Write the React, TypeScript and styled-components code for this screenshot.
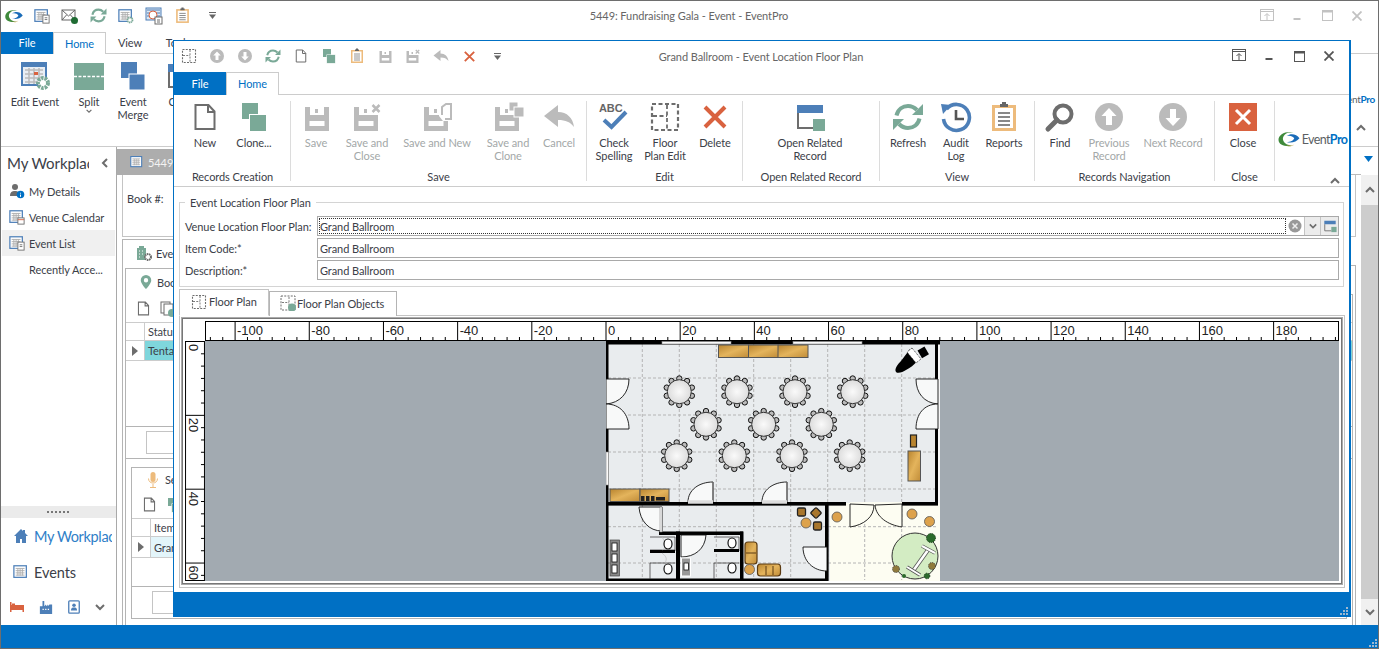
import React from "react";
import styled, { createGlobalStyle } from "styled-components";

const BLUE = "#0070c4";
const TEAL = "#7aa997";
const STEEL = "#4d7fb8";
const GREY = "#6d6d6d";
const OFF = "#bbbbbb";
const RED = "#d9623f";
const TAN = "#edbb7c";

const Global = createGlobalStyle`
  html, body { margin: 0; padding: 0; background: #fff; overflow: hidden; }
  * { box-sizing: border-box; }
  body { font-family: "Lato", "Noto Sans", sans-serif; font-size: 11px; letter-spacing: -0.08px; color: #3b4048; }
`;

const Ico = styled.svg<{ $w?: number; $h?: number }>`
  width: ${(p) => p.$w ?? 32}px;
  height: ${(p) => p.$h ?? p.$w ?? 32}px;
  display: block;
  flex: none;
`;

type IP = { s?: number; c?: string };
const NewIco = ({ s, c = GREY }: IP) => (
  <Ico $w={s} viewBox="0 0 32 32"><path d="M6.500 4h13l6 6.500V28h-19zM19 4v7h6.500" fill="#fff" stroke={c} strokeWidth="2" /></Ico>
);
const CloneIco = ({ s }: IP) => (
  <Ico $w={s} viewBox="0 0 32 32"><rect x="4" y="2" width="16" height="16" fill={TEAL} /><rect x="11.500" y="13.500" width="17" height="17" fill={TEAL} stroke="#fff" strokeWidth="1" /></Ico>
);
const floppy = (
  <path fillRule="evenodd" d="M5 6h24v24H5zM10 6v8h14V6zM9.500 20v5h15v-5z M15 8h3v4h-3z" fill={OFF} />
);
const SaveIco = ({ s }: IP) => <Ico $w={s} viewBox="0 0 32 32">{floppy}</Ico>;
const SaveCloseIco = ({ s }: IP) => (
  <Ico $w={s} viewBox="0 0 32 32">
    <g transform="translate(-2 0)">{floppy}</g>
    <rect x="19" y="2" width="12" height="12" fill="#fff" />
    <path d="M21.500 4l7 7m0-7l-7 7" stroke={OFF} strokeWidth="2.500" />
  </Ico>
);
const SaveNewIco = ({ s }: IP) => (
  <Ico $w={s} viewBox="0 0 32 32">
    <g transform="translate(-2 0)">{floppy}</g>
    <path d="M18 15V5l4-3h8v18h-8" fill="#fff" />
    <path d="M21 14V6l4-3h5v15h-6" fill="none" stroke={OFF} strokeWidth="2" />
  </Ico>
);
const SaveCloneIco = ({ s }: IP) => (
  <Ico $w={s} viewBox="0 0 32 32">
    <g transform="translate(-2 0)">{floppy}</g>
    <rect x="17" y="1" width="9" height="9" fill={OFF} stroke="#fff" />
    <rect x="22" y="6" width="10" height="10" fill={OFF} stroke="#fff" />
  </Ico>
);
const CancelIco = ({ s, c = OFF }: IP) => (
  <Ico $w={s} viewBox="0 0 32 32"><path d="M1 15L15 4v7c9 0 15 6 16 15-4-5-8-7-16-7v7z" fill={c} /></Ico>
);
const CheckIco = () => (
  <Ico viewBox="0 0 32 32">
    <text x="1" y="11" fontFamily="Liberation Sans" fontSize="11" fontWeight="700" fill="#666">ABC</text>
    <path d="M6 19l7.500 7L28 11" fill="none" stroke={STEEL} strokeWidth="4" />
  </Ico>
);
const PlanIco = ({ s }: IP) => (
  <Ico $w={s} viewBox="0 0 32 32">
    <rect x="3" y="3" width="26" height="26" fill="none" stroke={GREY} strokeWidth="2.200" strokeDasharray="4 2.500" />
    <path d="M18 4v24M4 15h14" fill="none" stroke={GREY} strokeWidth="1.800" strokeDasharray="4 2.500" />
  </Ico>
);
const PlanObjIco = () => (
  <Ico $w={16} viewBox="0 0 32 32">
    <rect x="2" y="2" width="28" height="28" fill="none" stroke={GREY} strokeWidth="2" strokeDasharray="4 2.500" />
    <path d="M18 4v24M4 15h14" fill="none" stroke={GREY} strokeWidth="1.800" strokeDasharray="4 2.500" />
    <circle cx="24" cy="25" r="8" fill={TEAL} />
  </Ico>
);
const XIco = ({ s, c = RED, w = 4 }: IP & { w?: number }) => (
  <Ico $w={s} viewBox="0 0 32 32"><path d="M6 6l20 20m0-20L6 26" stroke={c} strokeWidth={w} fill="none" /></Ico>
);
const RelatedIco = ({ s }: IP) => (
  <Ico $w={s} viewBox="0 0 32 32">
    <rect x="3" y="4" width="26" height="8" fill={STEEL} />
    <path d="M4 12v15h15" fill="none" stroke={GREY} strokeWidth="2" />
    <rect x="19" y="18" width="12" height="12" fill={TEAL} />
  </Ico>
);
const RefreshIco = ({ s }: IP) => (
  <Ico $w={s} viewBox="0 0 32 32">
    <path d="M4.500 14.500C6 8 11 5 16 5c4 0 6.500 1.500 9 4" fill="none" stroke={TEAL} strokeWidth="4" />
    <path d="M31 3v11H20z" fill={TEAL} />
    <path d="M27.500 17.500C26 24 21 27 16 27c-4 0-6.500-1.500-9-4" fill="none" stroke={TEAL} strokeWidth="4" />
    <path d="M1 29V18h11z" fill={TEAL} />
  </Ico>
);
const AuditIco = () => (
  <Ico viewBox="0 0 32 32">
    <path d="M6.500 8A13 13 0 1 1 3.500 18" fill="none" stroke={STEEL} strokeWidth="3.600" />
    <path d="M1 3l10 1-8 9z" fill={STEEL} />
    <path d="M16 9v9h8" fill="none" stroke="#555" strokeWidth="2.600" />
  </Ico>
);
const ReportsIco = ({ s }: IP) => (
  <Ico $w={s} viewBox="0 0 32 32">
    <rect x="4" y="4" width="24" height="26" fill={TAN} />
    <rect x="7" y="7" width="18" height="20" fill="#fff" />
    <path d="M12 6V3h2V1h4v2h2v3z" fill="#666" />
    <path d="M10 12h12M10 16h12M10 20h12M10 24h12" stroke="#888" strokeWidth="1.800" />
  </Ico>
);
const FindIco = () => (
  <Ico viewBox="0 0 32 32">
    <circle cx="19" cy="13" r="8.500" fill="none" stroke={GREY} strokeWidth="4" />
    <path d="M13 19L4 28" stroke={GREY} strokeWidth="5" strokeLinecap="round" />
  </Ico>
);
const RoundArrow = ({ s, down }: IP & { down?: boolean }) => (
  <Ico $w={s} viewBox="0 0 32 32">
    <circle cx="16" cy="16" r="14" fill={OFF} />
    <path transform={down ? "rotate(180 16 16)" : undefined} d="M16 7l7.500 8H19v9h-6v-9H8.500z" fill="#fff" />
  </Ico>
);
const CloseBox = () => (
  <Ico viewBox="0 0 32 32">
    <rect x="2" y="2" width="28" height="28" fill={RED} />
    <path d="M9 9l14 14m0-14L9 23" stroke="#fff" strokeWidth="3" />
  </Ico>
);
const Swoosh = ({ s = 24 }: IP) => (
  <Ico $w={s} viewBox="0 0 32 24">
    <path d="M2 13C2 6 11 1 22 3 13 2 7 7 8 13c1 5 7 8 14 8C11 23 2 20 2 13z" fill="#3f8a3c" />
    <path d="M13 8c5-4 13-3 17 3-4 5-11 7-17 5 5 0 9-2 10-5-2-3-6-4-10-3z" fill="#1a6cb8" />
    <path d="M12 20c4 2 8 1 11-1-3 3-7 4-11 1z" fill="#d9a23f" />
  </Ico>
);
const Cal = ({ s = 16, extra }: IP & { extra?: "doc" | "gear" | "cal" }) => (
  <Ico $w={s} viewBox="0 0 18 18">
    <rect x="1" y="2" width="14" height="13" fill="#fff" stroke={STEEL} strokeWidth="1.400" />
    <path d="M3 5h10M3 7.500h10M3 10h10M3 12.500h10M5.500 5v8M8 5v8M10.500 5v8" stroke="#aaa" strokeWidth="1" />
    {extra === "doc" && <><rect x="10" y="8" width="7" height="9" fill="#fff" stroke={GREY} /><path d="M12 11h3M12 13h3" stroke={GREY} /></>}
    {extra === "cal" && <><rect x="10" y="10" width="7" height="7" fill="#fff" stroke={GREY} /><path d="M10 12h7" stroke={RED} /></>}
    {extra === "gear" && <circle cx="13.500" cy="13.500" r="2.800" fill="#fff" stroke={TEAL} strokeWidth="2" strokeDasharray="1.500 .6" />}
  </Ico>
);
const Mail = () => (
  <Ico $w={18} viewBox="0 0 18 18">
    <rect x="1" y="3" width="13" height="10" fill="#fff" stroke="#666" />
    <path d="M1 3l6.500 6L14 3M1 13l4.500-5M14 13L9.500 8" fill="none" stroke="#666" />
    <circle cx="13.500" cy="13.500" r="3.500" fill="#1f6b33" />
  </Ico>
);
const Schedule = () => (
  <Ico $w={18} viewBox="0 0 18 18">
    <rect x="1" y="1" width="15" height="12" fill="#dfe8f2" stroke={STEEL} />
    <path d="M2 3h13M2 6h13M2 9h13" stroke={STEEL} />
    <circle cx="8" cy="8" r="4" fill="#fff" stroke={RED} />
    <rect x="10" y="10" width="7" height="7" fill="#fff" stroke={GREY} />
    <path d="M12 13h3M12 15h3" stroke={GREY} />
  </Ico>
);
const Gear = () => (
  <Ico viewBox="0 0 32 32">
    <rect x="3" y="3" width="24" height="22" fill="#e9eef4" stroke={STEEL} strokeWidth="2" />
    <rect x="3" y="3" width="24" height="4" fill={STEEL} />
    <path d="M6 10h18M6 14h18M6 18h18M6 22h18M10 8v16M15 8v16M20 8v16" stroke="#bbb" strokeWidth="1.500" />
    <rect x="15" y="12" width="4" height="3" fill={RED} />
    <circle cx="24" cy="23" r="5" fill="#fff" stroke={TEAL} strokeWidth="4" strokeDasharray="2.500 1" />
  </Ico>
);
const Split = () => (
  <Ico viewBox="0 0 32 32">
    <rect x="1" y="3" width="30" height="27" fill={TEAL} />
    <path d="M1 16.500h30" stroke="#fff" strokeWidth="1.500" strokeDasharray="3 1.500" />
  </Ico>
);
const Merge = () => (
  <Ico viewBox="0 0 32 32">
    <rect x="4" y="2" width="16" height="16" fill={STEEL} />
    <rect x="12" y="14" width="16" height="16" fill={STEEL} stroke="#fff" strokeWidth="1" />
  </Ico>
);
const Person = () => (
  <Ico $w={16} viewBox="0 0 16 16">
    <circle cx="6" cy="4" r="3" fill={GREY} />
    <path d="M1 13c0-4 2-5 5-5s4 1 4 5z" fill={GREY} />
    <circle cx="11.500" cy="11.500" r="3.800" fill={BLUE} />
    <path d="M11.500 9.800v.8m0 1v2.200" stroke="#fff" />
  </Ico>
);
const Pin = () => (
  <Ico $w={14} viewBox="0 0 14 16"><path fillRule="evenodd" d="M7 0a6 6 0 0 1 6 6c0 4-6 10-6 10S1 10 1 6a6 6 0 0 1 6-6zm0 3.500a2.500 2.500 0 1 0 0 5 2.500 2.500 0 0 0 0-5z" fill={TEAL} /></Ico>
);
const Building = () => (
  <Ico $w={16} viewBox="0 0 16 16">
    <rect x="1" y="3" width="9" height="12" fill={TEAL} />
    <rect x="3" y="1" width="5" height="3" fill={TEAL} />
    <path d="M3 6h1M6 6h1M3 9h1M6 9h1M3 12h1" stroke="#fff" />
    <circle cx="12" cy="12" r="3" fill="#fff" stroke={GREY} strokeWidth="2" strokeDasharray="1.500 .6" />
  </Ico>
);
const Mic = () => (
  <Ico $w={16} viewBox="0 0 16 16">
    <rect x="5.500" y="0" width="5" height="10" rx="2.500" fill={TAN} />
    <path d="M3.500 6.500c0 6 9 6 9 0M8 12v3M5 15.500h6" fill="none" stroke={TAN} />
  </Ico>
);
const CopyPlus = () => (
  <Ico $w={16} viewBox="0 0 16 16">
    <rect x="1" y="1" width="9" height="11" fill="#fff" stroke={GREY} />
    <rect x="4" y="3" width="9" height="11" fill="#fff" stroke={GREY} />
    <circle cx="12" cy="12" r="4" fill={TEAL} />
  </Ico>
);
const Home = () => (
  <Ico $w={16} viewBox="0 0 16 16"><path d="M8 1L1 8h2v7h4v-4h2v4h4V8h2l-3-3V2h-2v1z" fill={STEEL} /></Ico>
);
const Bed = () => (
  <Ico $w={16} viewBox="0 0 16 16"><path fillRule="evenodd" d="M1 3h1.500v3H15v7h-1.500v-2h-11v2H1zM3 4.500h3V6H3z" fill={RED} /></Ico>
);
const Factory = () => (
  <Ico $w={14} viewBox="0 0 14 16"><path fillRule="evenodd" d="M3 1h2v6l2-2v2l2-2v2l2-2 3 0v11H0V7h3zM3 10v1.500h1.500V10zm3 0v1.500h1.500V10zm3 0v1.500h1.500V10z" fill={STEEL} /></Ico>
);
const Contact = () => (
  <Ico $w={14} viewBox="0 0 14 16">
    <rect x="1" y="1" width="12" height="14" rx="1" fill="#fff" stroke={STEEL} strokeWidth="1.500" />
    <circle cx="7" cy="6" r="2" fill={STEEL} />
    <path d="M3.500 12c0-3 1.500-3.500 3.500-3.500s3.500.5 3.500 3.500z" fill={STEEL} />
  </Ico>
);
const Chev = ({ dir = "down", c = GREY, s = 10 }: { dir?: "down" | "up" | "left"; c?: string; s?: number }) => (
  <Ico $w={s} viewBox="0 0 10 10">
    <path d={dir === "down" ? "M1 3l4 4 4-4" : dir === "up" ? "M1 7l4-4 4 4" : "M7 1L3 5l4 4"} fill="none" stroke={c} strokeWidth="2" />
  </Ico>
);
const QatMore = () => (
  <Ico $w={9} viewBox="0 0 9 9"><path d="M1 1.500h7" stroke="#666" /><path d="M1 3.500h7L4.500 8z" fill="#666" /></Ico>
);
const Restore = ({ c }: { c: string }) => (
  <Ico $w={14} viewBox="0 0 14 14"><rect x=".5" y=".5" width="13" height="11" fill="none" stroke={c} /><path d="M.5 2.500h13M7 12V5M4.500 7L7 4.500 9.500 7" fill="none" stroke={c} /></Ico>
);
const Minim = ({ c }: { c: string }) => (
  <Ico $w={10} viewBox="0 0 10 10"><path d="M1.500 8h7" stroke={c} strokeWidth="2" /></Ico>
);
const Maxim = ({ c }: { c: string }) => (
  <Ico $w={11} viewBox="0 0 11 11"><rect x=".5" y=".5" width="10" height="10" fill="none" stroke={c} /><path d="M0 1.500h11" stroke={c} strokeWidth="2" /></Ico>
);
const CloseMini = ({ c }: { c: string }) => (
  <Ico $w={10} viewBox="0 0 10 10"><path d="M.5.500l9 9m0-9l-9 9" stroke={c} strokeWidth="1.800" /></Ico>
);
const Grip = () => (
  <Ico $w={9} viewBox="0 0 9 9"><path d="M7 1h2v2H7zM4 4h2v2H4zM7 4h2v2H7zM1 7h2v2H1zM4 7h2v2H4zM7 7h2v2H7z" fill="#9fb8cf" /></Ico>
);
const Tri = ({ c = GREY }: { c?: string }) => (
  <Ico $w={6} $h={10} viewBox="0 0 6 10"><path d="M0 0l6 5-6 5z" fill={c} /></Ico>
);

/* ---------- outer window ---------- */
const Win = styled.div`
  position: relative;
  width: 1379px;
  height: 649px;
  border: 1px solid #6e6e6e;
  display: flex;
  flex-direction: column;
  overflow: hidden;
  background: #fff;
`;
const TitleBar = styled.div<{ $h: number; $pb: number }>`
  position: relative;
  height: ${(p) => p.$h}px;
  padding-bottom: ${(p) => p.$pb}px;
  display: flex;
  align-items: center;
  flex: none;
`;
const Qat = styled.div<{ $pl: number; $gap: number }>`
  display: flex;
  align-items: center;
  gap: ${(p) => p.$gap}px;
  padding-left: ${(p) => p.$pl}px;
`;
const QatSlot = styled.span<{ $w?: number }>`
  width: ${(p) => p.$w ?? 18}px;
  height: 18px;
  display: flex;
  align-items: center;
  justify-content: center;
`;
const Title = styled.div<{ $x: number; $pb: number }>`
  position: absolute;
  left: ${(p) => p.$x}px;
  top: 0;
  bottom: ${(p) => p.$pb}px;
  transform: translateX(-50%);
  display: flex;
  align-items: center;
  color: #666;
  white-space: nowrap;
`;
const Controls = styled.div<{ $pr: number }>`
  margin-left: auto;
  padding-right: ${(p) => p.$pr}px;
  display: flex;
  align-items: center;
`;
const Ctl = styled.span`
  width: 30px;
  display: flex;
  justify-content: center;
`;
const TabRow = styled.div<{ $h: number }>`
  height: ${(p) => p.$h}px;
  display: flex;
  flex: none;
  position: relative;
  z-index: 1;
`;
const FileTab = styled.div`
  width: 52px;
  background: ${BLUE};
  color: #fff;
  display: flex;
  align-items: center;
  justify-content: center;
  margin-bottom: -1px;
  padding-bottom: 1px;
`;
const HomeTab = styled.div<{ $w: number }>`
  width: ${(p) => p.$w}px;
  border: 1px solid #ccc;
  border-bottom: none;
  background: #fff;
  margin-bottom: -1px;
  padding-bottom: 1px;
  color: ${BLUE};
  display: flex;
  align-items: center;
  justify-content: center;
`;
const PlainTab = styled.div<{ $w: number }>`
  width: ${(p) => p.$w}px;
  display: flex;
  align-items: center;
  justify-content: center;
`;
const OuterRibbon = styled.div`
  height: 94px;
  flex: none;
  border-top: 1px solid #ccc;
  border-bottom: 1px solid #ccc;
  display: flex;
  padding-top: 6px;
`;
const RibBtn = styled.div<{ $w: number; $off?: boolean }>`
  width: ${(p) => p.$w}px;
  flex: none;
  display: flex;
  flex-direction: column;
  align-items: center;
  text-align: center;
  line-height: 13px;
  color: ${(p) => (p.$off ? "#a3a8a8" : "#3b4048")};
`;
const RibText = styled.div`
  padding-top: 3px;
  white-space: pre-line;
`;
const OuterLogo = styled.div`
  margin-left: auto;
  width: 28px;
  display: flex;
  flex-direction: column;
  align-items: flex-end;
  font-size: 10px;
  letter-spacing: -0.3px;
  padding: 33px 3px 0 0;
`;
const LogoText = styled.span`
  color: #5b5f63;
  white-space: nowrap;
  b { color: ${BLUE}; font-weight: 700; }
`;
const Collapse = styled.span`
  margin-top: 18px;
  margin-right: 9px;
`;
const Body = styled.div`
  flex: 1;
  min-height: 0;
  display: flex;
`;
const Side = styled.aside`
  width: 116px;
  flex: none;
  border-right: 1px solid #a9a9a9;
  display: flex;
  flex-direction: column;
`;
const SideHead = styled.div`
  height: 31px;
  display: flex;
  align-items: center;
  padding-left: 6px;
  font-size: 15px;
  color: #3b4048;
`;
const Clip = styled.span<{ $w: number }>`
  width: ${(p) => p.$w}px;
  overflow: hidden;
  white-space: nowrap;
  display: block;
`;
const BlueClip = styled(Clip)`
  letter-spacing: -0.35px;
`;
const SideHeadChev = styled.span`
  margin-left: 11px;
`;
const NavItem = styled.div<{ $on?: boolean }>`
  height: 26px;
  margin-right: 1px;
  margin-left: 1px;
  padding-left: 7px;
  display: flex;
  align-items: center;
  gap: 4px;
  background: ${(p) => (p.$on ? "#f0f0f0" : "transparent")};
  white-space: nowrap;
`;
const IconGap = styled.span`
  width: 16px;
  flex: none;
`;
const SideSpacer = styled.div`
  flex: 1;
`;
const Splitter = styled.div`
  height: 12px;
  background: #ebebeb;
  display: flex;
  align-items: center;
  justify-content: center;
  gap: 1px;
  flex: none;
  i { width: 2px; height: 2px; background: #777; margin-right: 1px; }
`;
const BigNav = styled.div<{ $blue?: boolean }>`
  height: 36px;
  display: flex;
  align-items: center;
  gap: 5px;
  padding-left: 12px;
  font-size: 14.5px;
  color: ${(p) => (p.$blue ? "#2f80c8" : "#3b4048")};
`;
const SideIcons = styled.div`
  height: 35px;
  flex: none;
  display: flex;
  align-items: center;
  padding-left: 8px;
  gap: 14px;
  padding-bottom: 2px;
`;
const Main = styled.div`
  flex: 1;
  min-width: 0;
  display: flex;
  flex-direction: column;
`;
const DocTabs = styled.div`
  height: 28px;
  flex: none;
  display: flex;
  align-items: flex-end;
  position: relative;
  z-index: 1;
  border-bottom: 1px solid #bbb;
  background: #fff;
`;
const DocTab = styled.div`
  width: 58px;
  height: 26px;
  background: #adadad;
  color: #f3f3f3;
  display: flex;
  align-items: center;
  padding-left: 13px;
  gap: 4px;
  margin-bottom: -1px;
`;
const Content = styled.div`
  flex: 1;
  min-height: 0;
  padding: 0 5px;
  display: flex;
  flex-direction: column;
  gap: 2px;
`;
const InfoPanel = styled.div`
  height: 62px;
  flex: none;
  border: 1px solid #c4c4c4;
  border-top: none;
  padding: 17px 4px 0;
`;
const Tabbed = styled.div`
  flex: 1;
  min-height: 0;
  display: flex;
  flex-direction: column;
`;
const BackTab = styled.div<{ $h?: number }>`
  width: 200px;
  height: ${(p) => p.$h ?? 27}px;
  flex: none;
  border: 1px solid #b4b4b4;
  border-bottom: none;
  background: #fff;
  margin-bottom: -1px;
  position: relative;
  z-index: 1;
  display: flex;
  align-items: center;
  gap: 4px;
  padding-left: 13px;
  white-space: nowrap;
`;
const BackBody = styled.div<{ $pad?: number }>`
  flex: 1;
  min-height: 0;
  border: 1px solid #b4b4b4;
  border-bottom: none;
  padding: ${(p) => p.$pad ?? 0}px ${(p) => p.$pad ?? 0}px 0;
  display: flex;
  flex-direction: column;
`;
const GridSection = styled.div`
  height: 164px;
  flex: none;
  border-bottom: 1px solid #b4b4b4;
  display: flex;
  flex-direction: column;
`;
const MiniBar = styled.div`
  height: 28px;
  flex: none;
  display: flex;
  align-items: center;
  gap: 8px;
  padding-left: 9px;
  border-bottom: 1px solid #ccc;
`;
const GridRow = styled.div<{ $h: number }>`
  height: ${(p) => p.$h}px;
  display: flex;
  flex: none;
  border-bottom: 1px solid #ccc;
`;
const RowHead = styled.div`
  width: 19px;
  flex: none;
  border-right: 1px solid #ccc;
  display: flex;
  align-items: center;
  justify-content: center;
`;
const Cell = styled.div<{ $bg?: string }>`
  flex: 1;
  background: ${(p) => p.$bg ?? "transparent"};
  padding-left: 3px;
  display: flex;
  align-items: center;
`;
const GridFill = styled.div`
  flex: 1;
  border-bottom: 1px solid #b4b4b4;
`;
const FilterBox = styled.div`
  height: 23px;
  width: 100px;
  border: 1px solid #c4c4c4;
  flex: none;
`;
const Pager = styled.div<{ $pl: number; $h: number }>`
  height: ${(p) => p.$h}px;
  flex: none;
  padding: 4px 0 0 ${(p) => p.$pl}px;
`;
const Nested = styled.div`
  margin: 8px 5px 6px 5px;
  flex: 1;
  min-height: 0;
  display: flex;
  flex-direction: column;
`;
const NestedBody = styled(BackBody)`
  border-bottom: 1px solid #b4b4b4;
`;
const ScrollBar = styled.div`
  width: 17px;
  flex: none;
  display: flex;
  flex-direction: column;
  background: #f0f0f0;
`;
const ScrollTop = styled.div`
  height: 28px;
  flex: none;
  background: #fff;
  display: flex;
  align-items: center;
  justify-content: flex-end;
  padding: 0 5px 4px 0;
`;
const ScrollBtn = styled.div<{ $h: number }>`
  height: ${(p) => p.$h}px;
  flex: none;
  display: flex;
  align-items: center;
  justify-content: center;
`;
const Thumb = styled.div`
  flex: 1;
  background: #cdcdcd;
`;
const Status = styled.div`
  height: 23px;
  flex: none;
  background: ${BLUE};
  display: flex;
  align-items: flex-end;
  justify-content: flex-end;
  padding: 0 1px 1px 0;
`;

/* ---------- dialog ---------- */
const Dialog = styled.section`
  position: absolute;
  left: 172px;
  top: 39px;
  width: 1178px;
  height: 577px;
  background: #fff;
  border: 1px solid ${BLUE};
  border-right-width: 2px;
  z-index: 5;
  display: flex;
  flex-direction: column;
`;
const Ribbon = styled.div`
  height: 93px;
  flex: none;
  border-top: 1px solid #ccc;
  border-bottom: 1px solid #ccc;
  display: flex;
  padding: 6px 0 0 1px;
`;
const Group = styled.div<{ $w: number }>`
  width: ${(p) => p.$w}px;
  height: 80px;
  flex: none;
  border-right: 1px solid #dcdcdc;
  display: flex;
  flex-direction: column;
`;
const GroupBtns = styled.div<{ $pl: number }>`
  flex: 1;
  display: flex;
  padding-left: ${(p) => p.$pl}px;
`;
const GroupLabel = styled.div`
  height: 14px;
  line-height: 14px;
  margin-bottom: -3px;
  text-align: center;
  white-space: nowrap;
`;
const LogoGroup = styled.div`
  flex: 1;
  position: relative;
  display: flex;
  flex-direction: column;
  align-items: center;
  padding-top: 26px;
`;
const LogoRow = styled.div`
  display: flex;
  align-items: center;
  gap: 1px;
  font-size: 12.5px;
  letter-spacing: -0.6px;
`;
const GroupCollapse = styled.span`
  position: absolute;
  right: 9px;
  bottom: 0;
`;
const Form = styled.div`
  flex: 1;
  min-height: 0;
  padding: 8px 5px 5px 5px;
  display: flex;
  flex-direction: column;
`;
const Field = styled.fieldset`
  margin: 0;
  padding: 6px 4px 0 5px;
  height: 92px;
  flex: none;
  border: 1px solid #d4d4d4;
  display: flex;
  flex-direction: column;
  gap: 2px;
  legend { padding: 0 5px; margin-left: 0; line-height: 15px; color: #3b4048; }
`;
const FieldRow = styled.div`
  height: 20px;
  flex: none;
  display: flex;
  align-items: center;
`;
const FieldLabel = styled.label`
  width: 132px;
  flex: none;
  white-space: nowrap;
`;
const Input = styled.div`
  flex: 1;
  height: 20px;
  border: 1px solid #a9a9a9;
  padding: 0 2px;
  display: flex;
  align-items: center;
`;
const Combo = styled(Input)`
  padding: 0 0 0 1px;
`;
const ComboText = styled.div`
  flex: 1;
  height: 16px;
  outline: 1px dotted #333;
  outline-offset: -1px;
  padding-left: 1px;
  line-height: 17px;
`;
const ClearBtn = styled.span`
  width: 18px;
  display: flex;
  justify-content: center;
`;
const ComboBtn = styled.span<{ $w: number }>`
  width: ${(p) => p.$w}px;
  height: 18px;
  background: #ececec;
  border-left: 1px solid #c4c4c4;
  display: flex;
  align-items: center;
  justify-content: center;
`;
const PlanTabs = styled.div`
  height: 27px;
  flex: none;
  margin-top: 1px;
  display: flex;
  align-items: flex-end;
`;
const PlanTab = styled.div<{ $on?: boolean; $w: number }>`
  width: ${(p) => p.$w}px;
  height: ${(p) => (p.$on ? 27 : 25)}px;
  border: 1px solid ${(p) => (p.$on ? "#c4c4c4" : "#b4b4b4")};
  border-bottom: ${(p) => (p.$on ? "1px solid #fff" : "none")};
  margin-bottom: -1px;
  background: #fff;
  position: relative;
  z-index: 1;
  display: flex;
  align-items: center;
  gap: ${(p) => (p.$on ? 2 : 1)}px;
  padding: 0 0 2px ${(p) => (p.$on ? 11 : 10)}px;
  white-space: nowrap;
`;
const PlanBody = styled.div`
  height: 273px;
  flex: none;
  border: 1px solid #c4c4c4;
  padding: 1px 1px 2px;
  margin-right: -1px;
`;
const Frame = styled.div`
  height: 100%;
  border: 1px solid #aaa;
`;
const Frame2 = styled.div`
  height: 100%;
  border: 1px solid #777;
  padding: 2px;
  display: grid;
  grid-template-columns: 20px 1fr;
  grid-template-rows: 20px 1fr;
`;
const Corner = styled.div`
  background: #fff;
`;
const RulerSvg = styled.svg`
  display: block;
  width: 100%;
  height: 100%;
  background: #fff;
`;
const Stage = styled.div`
  background: #a2aab1;
  position: relative;
  overflow: hidden;
  min-width: 0;
`;
const PlanSvg = styled.svg`
  position: absolute;
  left: 401px;
  top: 0;
  width: 334px;
  height: 241px;
  display: block;
`;
const Footer = styled.div`
  height: 24px;
  flex: none;
  background: ${BLUE};
  display: flex;
  align-items: flex-end;
  justify-content: flex-end;
  padding: 0 1px 1px 0;
`;

/* ---------- rulers & plan ---------- */
const U = 3.709;
const X0 = 401;
const TopRuler = () => {
  const ticks: React.ReactNode[] = [];
  for (let i = -32; i < 60; i++) {
    const x = X0 + (i * U * 20) / 6;
    if (x < 0 || x > 1134) continue;
    const major = i % 6 === 0;
    ticks.push(<line key={i} x1={x} x2={x} y1={major ? 0 : 16} y2={20} stroke="#000" />);
    if (major) ticks.push(<text key={"t" + i} x={x + 2} y={14} fontFamily="Liberation Sans" fontSize="13" fill="#222">{(i / 6) * 20}</text>);
  }
  return (
    <RulerSvg viewBox="0 0 1134 20" preserveAspectRatio="none">
      <rect x=".5" y=".5" width="1133" height="19" fill="#fff" stroke="#000" />
      {ticks}
    </RulerSvg>
  );
};
const LeftRuler = () => {
  const ticks: React.ReactNode[] = [];
  for (let i = 0; i < 20; i++) {
    const y = i * 12.36;
    const major = i % 6 === 0;
    ticks.push(<line key={i} y1={y + 0.5} y2={y + 0.5} x1={major ? 0 : 16} x2={20} stroke="#000" />);
    if (major) ticks.push(<text key={"t" + i} transform={`translate(4 ${y + 3}) rotate(90)`} fontFamily="Liberation Sans" fontSize="13" fill="#222">{(i / 6) * 20}</text>);
  }
  return (
    <RulerSvg viewBox="0 0 20 241">
      <rect x=".5" y=".5" width="19" height="240" fill="#fff" stroke="#000" />
      {ticks}
    </RulerSvg>
  );
};

const T1 = [[73.3, 50.7], [131, 50.7], [189, 50.7], [246.7, 50.7], [100, 83.3], [157.7, 83.3], [215.3, 83.3], [70.7, 114.7], [128.3, 114.7], [186, 114.7], [243.7, 114.7]];
const Table = ({ x, y }: { x: number; y: number }) => (
  <g>
    {Array.from({ length: 10 }).map((_, i) => {
      const a = ((i * 36 + 18) * Math.PI) / 180;
      return <circle key={i} cx={x + 13.2 * Math.cos(a)} cy={y + 13.2 * Math.sin(a)} r="2.700" fill="#bbb" stroke="#111" strokeWidth="1" />;
    })}
    <circle cx={x} cy={y} r="12" fill="url(#tbl)" stroke="#333" strokeWidth="1" />
  </g>
);
const Door = ({ d, fill = "#f8f9f9" }: { d: string; fill?: string }) => <path d={d} fill={fill} stroke="#111" strokeWidth=".9" />;
const Wood = ({ x, y, w, h }: { x: number; y: number; w: number; h: number }) => (
  <rect x={x} y={y} width={w} height={h} fill="url(#wood)" stroke="#555" strokeWidth="1" />
);
const Stool = ({ x, y }: { x: number; y: number }) => <circle cx={x} cy={y} r="5" fill="#dda24b" stroke="#555" strokeWidth=".8" />;
const Square = ({ x, y, r = 0 }: { x: number; y: number; r?: number }) => (
  <rect x={x - 4} y={y - 4} width="8" height="8" rx="1.500" fill="#a8762c" stroke="#222" strokeWidth="1.300" transform={`rotate(${r} ${x} ${y})`} />
);
const Toilet = ({ x, y }: { x: number; y: number }) => (
  <ellipse cx={x} cy={y} rx="4" ry="5" fill="#fff" stroke="#111" strokeWidth="1.200" />
);
const Plan = () => {
  const gy = [37, 74, 111, 148, 185.7, 222];
  const gx = [36.3, 73.3, 110.3, 147.7, 184.7, 221.7, 258.7, 295.7];
  return (
    <PlanSvg viewBox="0 0 334 241">
      <defs>
        <radialGradient id="tbl"><stop offset="0" stopColor="#fafafa" /><stop offset="1" stopColor="#dcdcdc" /></radialGradient>
        <linearGradient id="wood" x1="0" y1="0" x2="1" y2="1"><stop offset="0" stopColor="#b8842f" /><stop offset=".5" stopColor="#e4b45c" /><stop offset="1" stopColor="#c08c38" /></linearGradient>
      </defs>
      <rect x="0" y="0" width="334" height="162" fill="#e9ecee" />
      <rect x="0" y="162" width="224" height="79" fill="#e9ecee" />
      <rect x="224" y="162" width="110" height="79" fill="#fdfdf2" />
      <rect x="330" y="0" width="4" height="162" fill="#f6f6f6" />
      <g stroke="#b4b4b4" strokeWidth="1" strokeDasharray="3 2">
        {gy.map((y) => <line key={y} x1="2" x2="332" y1={y} y2={y} />)}
        {gx.map((x) => <line key={x} x1={x} x2={x} y1="3" y2="239" />)}
      </g>
      <g fill="#000">
        <rect x="0" y="0" width="334" height="3.500" />
        <rect x="0" y="0" width="2.500" height="240" />
        <rect x="329" y="0" width="3" height="162" />
        <rect x="0" y="161" width="240" height="3.600" />
        <rect x="296" y="161" width="36" height="3.600" />
        <rect x="219" y="161" width="3.600" height="80" />
        <rect x="0" y="237.500" width="222" height="3.500" />
        <rect x="53" y="190.500" width="84" height="3.500" />
        <rect x="70" y="190.500" width="4" height="48" />
        <rect x="134" y="190.500" width="3.500" height="48" />
      </g>
      <g fill="#fafafa" stroke="#888" strokeWidth=".6">
        <rect x="56" y="0.500" width="69" height="2.500" />
        <rect x="187" y="0.500" width="69" height="2.500" />
        <rect x="0" y="111" width="2.500" height="33" />
        <rect x="244" y="161" width="52" height="3.600" stroke="none" fill="#fdfdf2" />
      </g>
      <rect x="0" y="38" width="3" height="50" fill="#fff" />
      <rect x="329" y="38" width="3.500" height="50" fill="#fff" />
      <Door d="M0 38h23C23 52 14 62 0 63z" />
      <Door d="M0 63c14 0 23 10 23 25H0z" />
      <Door d="M332 38h-22c0 14 8 24 22 25z" />
      <Door d="M332 63c-14 0-22 10-22 25h22z" />
      <Door d="M82 161c0-12 11-20 25-20v20z" />
      <Door d="M156 161c0-12 11-20 25-20v20z" />
      <path d="M107 141v20M181 141v20" stroke="#777" strokeWidth="1.200" />
      <path d="M82 161h25M156 161h25" stroke="#ddd" strokeWidth="3.600" />
      {T1.map(([x, y]) => <Table key={x + "-" + y} x={x} y={y} />)}
      <Wood x={112.5} y={4} w={30} h={12.5} />
      <Wood x={142.5} y={4} w={30} h={12.5} />
      <Wood x={172} y={4} w={30} h={12.5} />
      <path d="M290 31c-2-3 2-8 5-11l9-12 8 11c-4 5-8 8-12 10-3 2-8 4-10 2z" fill="#000" />
      <path d="M306 7l9 11-5 4-9-11z" fill="#fff" stroke="#111" strokeWidth=".8" strokeDasharray="1 1" />
      <rect x="313" y="7" width="8" height="9" fill="#000" transform="rotate(-30 317 11)" />
      <Wood x={302} y={110} w={12.5} h={30} />
      <rect x="304.500" y="94" width="6" height="12" fill="#b8842f" stroke="#222" strokeWidth="1.200" />
      <Wood x={4} y={148} w={30} h={12.5} />
      <Wood x={34} y={148} w={29} h={12.5} />
      <g fill="#222"><rect x="35" y="155" width="3.500" height="5" /><rect x="40" y="155" width="3.500" height="5" /><rect x="45" y="155" width="3.500" height="5" /><rect x="50" y="156" width="9" height="3.500" /></g>
      <Door d="M33 166h23v24C43 190 34 180 33 166z" />
      <rect x="54" y="166" width="2" height="25" fill="#fafafa" stroke="#777" strokeWidth=".5" />
      <Door d="M75 194h25c-1 14-11 22-25 22z" />
      <Door d="M197 206h24v24c-14 0-24-10-24-24z" />
      <path d="M44 196h25v14M44 209h25M44 222v16M44 222h25M108 196h25v14M108 222v16M108 222h25" fill="none" stroke="#444" strokeWidth=".8" />
      <rect x="44" y="209" width="25" height="3" fill="#000" />
      <rect x="108" y="208" width="25" height="3" fill="#000" />
      <path d="M56 196c5 8 5 10 0 13M56 212c5 4 5 6 3 10" fill="none" stroke="#bbb" strokeWidth=".7" />
      <Toilet x={62} y={203} />
      <Toilet x={62} y={228} />
      <Toilet x={126} y={202} />
      <Toilet x={126} y={227} />
      <rect x="4" y="199" width="9.500" height="36" fill="#888" stroke="#444" strokeWidth=".7" />
      <g fill="#fff" stroke="#111" strokeWidth=".8"><rect x="6" y="202" width="5" height="8" /><rect x="6" y="213" width="5" height="8" /><rect x="6" y="224" width="5" height="8" /></g>
      <rect x="75.500" y="217" width="9" height="18" fill="#999" stroke="#fff" strokeWidth="1" />
      <rect x="78" y="222" width="4.500" height="7" fill="#fff" stroke="#111" strokeWidth=".8" />
      <rect x="139" y="201" width="12" height="22" rx="3" fill="url(#wood)" stroke="#5a3a12" strokeWidth="1.200" />
      <path d="M140 212h10" stroke="#5a3a12" />
      <Stool x={143.5} y={228.5} />
      <rect x="151.500" y="223" width="23" height="12" rx="3" fill="url(#wood)" stroke="#5a3a12" strokeWidth="1.200" />
      <path d="M160 225v9M167 225v9" stroke="#5a3a12" />
      <Square x={195.5} y={171} />
      <Square x={210} y={172} r={45} />
      <Stool x={200} y={182} />
      <Square x={211.5} y={185} />
      <Stool x={231} y={176} />
      <Stool x={306} y={173} />
      <Stool x={323.5} y={180.5} />
      <Door d="M244 163v23c14-2 24-10 24-22z" fill="#fdfdf2" />
      <Door d="M296 163v23c-14-2-26-10-27-22z" fill="#fdfdf2" />
      <circle cx="309" cy="215" r="23" fill="#d3ecc3" stroke="#333" strokeWidth="1" />
      <path d="M322 209l-15 21" stroke="#555" strokeWidth="4" />
      <path d="M322 209l-15 21" stroke="#fff" strokeWidth="2.500" />
      <path d="M316 205l13 7M301 226l13 8" stroke="#555" strokeWidth="3.500" />
      <path d="M316 205l13 7M301 226l13 8" stroke="#fff" strokeWidth="2" />
      <circle cx="325" cy="197" r="4.500" fill="#2b6a2b" stroke="#103010" strokeDasharray="1 1" />
      <circle cx="326" cy="225" r="3.500" fill="#8f7a3c" stroke="#444" strokeDasharray="1 1" />
      <circle cx="290" cy="228" r="3.500" fill="#8f7a3c" stroke="#444" strokeDasharray="1 1" />
      <circle cx="321" cy="235" r="2.800" fill="#2b6a2b" stroke="#103010" strokeDasharray="1 1" />
      <circle cx="298" cy="235" r="2" fill="#2b6a2b" />
    </PlanSvg>
  );
};

type B = { w: number; t: string; off?: boolean; icon: React.ReactNode };
const G = ({ w, pl, label, items }: { w: number; pl: number; label: string; items: B[] }) => (
  <Group $w={w}>
    <GroupBtns $pl={pl}>
      {items.map((b) => (
        <RibBtn key={b.t} $w={b.w} $off={b.off}>
          {b.icon}
          <RibText>{b.t}</RibText>
        </RibBtn>
      ))}
    </GroupBtns>
    <GroupLabel>{label}</GroupLabel>
  </Group>
);

export default function App() {
  return (
    <>
      <Global />
      <Win>
        <TitleBar $h={31} $pb={2}>
          <Qat $pl={4} $gap={10}>
            <QatSlot><Swoosh s={20} /></QatSlot>
            <QatSlot><Cal extra="doc" /></QatSlot>
            <QatSlot><Mail /></QatSlot>
            <QatSlot><RefreshIco s={17} /></QatSlot>
            <QatSlot><Cal extra="gear" /></QatSlot>
            <QatSlot><Schedule /></QatSlot>
            <QatSlot><ReportsIco s={17} /></QatSlot>
            <QatSlot $w={22}><QatMore /></QatSlot>
          </Qat>
          <Title $x={688} $pb={2}>5449: Fundraising Gala - Event - EventPro</Title>
          <Controls $pr={6}>
            <Ctl><Restore c="#c2c2c2" /></Ctl>
            <Ctl><Minim c="#c2c2c2" /></Ctl>
            <Ctl><Maxim c="#c2c2c2" /></Ctl>
            <Ctl><CloseMini c="#c2c2c2" /></Ctl>
          </Controls>
        </TitleBar>
        <TabRow $h={21}>
          <FileTab>File</FileTab>
          <HomeTab $w={53}>Home</HomeTab>
          <PlainTab $w={48}>View</PlainTab>
          <PlainTab $w={48}>Tools</PlainTab>
        </TabRow>
        <OuterRibbon>
          <RibBtn $w={68}><Gear /><RibText>Edit Event</RibText></RibBtn>
          <RibBtn $w={40}><Split /><RibText>Split</RibText><Chev s={6} /></RibBtn>
          <RibBtn $w={48}><Merge /><RibText>{"Event\nMerge"}</RibText></RibBtn>
          <RibBtn $w={48}><RelatedIco /><RibText>Copy</RibText></RibBtn>
          <OuterLogo>
            <LogoText>vent<b>Pro</b></LogoText>
            <Collapse><Chev dir="up" /></Collapse>
          </OuterLogo>
        </OuterRibbon>
        <Body>
          <Side>
            <SideHead>
              <Clip $w={82}>My Workplace</Clip>
              <SideHeadChev><Chev dir="left" s={10} /></SideHeadChev>
            </SideHead>
            <NavItem><Person />My Details</NavItem>
            <NavItem><Cal extra="cal" />Venue Calendar</NavItem>
            <NavItem $on><Cal extra="doc" />Event List</NavItem>
            <NavItem><IconGap />Recently Acce...</NavItem>
            <SideSpacer />
            <Splitter><i /><i /><i /><i /><i /><i /></Splitter>
            <BigNav $blue><Home /><BlueClip $w={78}>My Workplace</BlueClip></BigNav>
            <BigNav><Cal s={16} />Events</BigNav>
            <SideIcons>
              <Bed /><Factory /><Contact /><Chev />
            </SideIcons>
          </Side>
          <Main>
            <DocTabs>
              <DocTab><Cal s={14} />5449</DocTab>
            </DocTabs>
            <Content>
              <InfoPanel>Book #:</InfoPanel>
              <Tabbed>
                <BackTab><Building />Event Details</BackTab>
                <BackBody $pad={2}>
                  <BackTab><Pin />Booked</BackTab>
                  <BackBody>
                    <GridSection>
                      <MiniBar><NewIco s={17} /><CopyPlus /></MiniBar>
                      <GridRow $h={18}><RowHead /><Cell>Status</Cell></GridRow>
                      <GridRow $h={20}><RowHead><Tri /></RowHead><Cell $bg="#7fd6dc">Tentative</Cell></GridRow>
                      <GridFill />
                      <Pager $pl={20} $h={31}><FilterBox /></Pager>
                    </GridSection>
                    <Nested>
                      <BackTab $h={24}><Mic />Setup</BackTab>
                      <NestedBody>
                        <MiniBar><NewIco s={17} /><CloneIco s={16} /></MiniBar>
                        <GridRow $h={18}><RowHead /><Cell>Item</Cell></GridRow>
                        <GridRow $h={21}><RowHead><Tri /></RowHead><Cell $bg="#e3f5fa">Grand Ballroom</Cell></GridRow>
                        <GridFill />
                        <Pager $pl={20} $h={31}><FilterBox /></Pager>
                      </NestedBody>
                    </Nested>
                  </BackBody>
                </BackBody>
              </Tabbed>
            </Content>
          </Main>
          <ScrollBar>
            <ScrollTop><Ico $w={9} $h={6} viewBox="0 0 9 6"><path d="M0 0h9L4.500 6z" fill={BLUE} /></Ico></ScrollTop>
            <ScrollBtn $h={30}><Chev dir="up" /></ScrollBtn>
            <Thumb />
            <ScrollBtn $h={26}><Chev /></ScrollBtn>
          </ScrollBar>
        </Body>
        <Status><Grip /></Status>

        <Dialog>
          <TitleBar $h={31} $pb={1}>
            <Qat $pl={6} $gap={10}>
              <QatSlot><PlanIco s={16} /></QatSlot>
              <QatSlot><RoundArrow s={16} /></QatSlot>
              <QatSlot><RoundArrow s={16} down /></QatSlot>
              <QatSlot><RefreshIco s={16} /></QatSlot>
              <QatSlot><NewIco s={16} /></QatSlot>
              <QatSlot><CloneIco s={16} /></QatSlot>
              <QatSlot><ReportsIco s={16} /></QatSlot>
              <QatSlot><SaveIco s={16} /></QatSlot>
              <QatSlot><SaveCloseIco s={16} /></QatSlot>
              <QatSlot><CancelIco s={16} /></QatSlot>
              <QatSlot><XIco s={15} w={4} /></QatSlot>
              <QatSlot><QatMore /></QatSlot>
            </Qat>
            <Title $x={587} $pb={1}>Grand Ballroom - Event Location Floor Plan</Title>
            <Controls $pr={5}>
              <Ctl><Restore c="#555" /></Ctl>
              <Ctl><Minim c="#555" /></Ctl>
              <Ctl><Maxim c="#555" /></Ctl>
              <Ctl><CloseMini c="#555" /></Ctl>
            </Controls>
          </TitleBar>
          <TabRow $h={22}>
            <FileTab>File</FileTab>
            <HomeTab $w={53}>Home</HomeTab>
          </TabRow>
          <Ribbon>
            <G w={116} pl={6} label="Records Creation" items={[
              { w: 48, t: "New", icon: <NewIco /> },
              { w: 50, t: "Clone...", icon: <CloneIco /> },
            ]} />
            <G w={296} pl={2} label="Save" items={[
              { w: 46, t: "Save", off: true, icon: <SaveIco /> },
              { w: 56, t: "Save and\nClose", off: true, icon: <SaveCloseIco /> },
              { w: 84, t: "Save and New", off: true, icon: <SaveNewIco /> },
              { w: 58, t: "Save and\nClone", off: true, icon: <SaveCloneIco /> },
              { w: 44, t: "Cancel", off: true, icon: <CancelIco /> },
            ]} />
            <G w={156} pl={1} label="Edit" items={[
              { w: 52, t: "Check\nSpelling", icon: <CheckIco /> },
              { w: 50, t: "Floor\nPlan Edit", icon: <PlanIco /> },
              { w: 50, t: "Delete", icon: <XIco /> },
            ]} />
            <G w={137} pl={7} label="Open Related Record" items={[
              { w: 120, t: "Open Related\nRecord", icon: <RelatedIco /> },
            ]} />
            <G w={155} pl={3} label="View" items={[
              { w: 50, t: "Refresh", icon: <RefreshIco /> },
              { w: 46, t: "Audit\nLog", icon: <AuditIco /> },
              { w: 50, t: "Reports", icon: <ReportsIco /> },
            ]} />
            <G w={180} pl={1} label="Records Navigation" items={[
              { w: 48, t: "Find", icon: <FindIco /> },
              { w: 50, t: "Previous\nRecord", off: true, icon: <RoundArrow /> },
              { w: 78, t: "Next Record", off: true, icon: <RoundArrow down /> },
            ]} />
            <G w={60} pl={3} label="Close" items={[
              { w: 50, t: "Close", icon: <CloseBox /> },
            ]} />
            <LogoGroup>
              <LogoRow>
                <Swoosh s={24} />
                <LogoText>Event<b>Pro</b></LogoText>
              </LogoRow>
              <GroupCollapse><Chev dir="up" /></GroupCollapse>
            </LogoGroup>
          </Ribbon>
          <Form>
            <Field>
              <legend>Event Location Floor Plan</legend>
              <FieldRow>
                <FieldLabel>Venue Location Floor Plan:</FieldLabel>
                <Combo>
                  <ComboText>Grand Ballroom</ComboText>
                  <ClearBtn>
                    <Ico $w={14} viewBox="0 0 14 14"><circle cx="7" cy="7" r="6.500" fill="#999" /><path d="M4.500 4.500l5 5m0-5l-5 5" stroke="#eee" strokeWidth="1.500" /></Ico>
                  </ClearBtn>
                  <ComboBtn $w={16}><Chev s={8} /></ComboBtn>
                  <ComboBtn $w={18}><RelatedIco s={14} /></ComboBtn>
                </Combo>
              </FieldRow>
              <FieldRow><FieldLabel>Item Code:*</FieldLabel><Input>Grand Ballroom</Input></FieldRow>
              <FieldRow><FieldLabel>Description:*</FieldLabel><Input>Grand Ballroom</Input></FieldRow>
            </Field>
            <PlanTabs>
              <PlanTab $on $w={90}><PlanIco s={16} />Floor Plan</PlanTab>
              <PlanTab $w={128}><PlanObjIco />Floor Plan Objects</PlanTab>
            </PlanTabs>
            <PlanBody>
              <Frame>
                <Frame2>
                  <Corner />
                  <TopRuler />
                  <LeftRuler />
                  <Stage><Plan /></Stage>
                </Frame2>
              </Frame>
            </PlanBody>
          </Form>
          <Footer><Grip /></Footer>
        </Dialog>
      </Win>
    </>
  );
}
